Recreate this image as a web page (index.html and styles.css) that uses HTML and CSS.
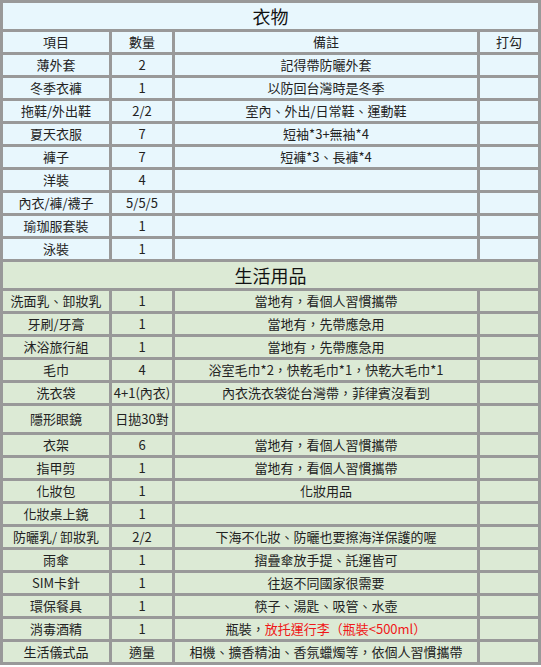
FILE: index.html
```html
<!DOCTYPE html>
<html lang="zh-Hant">
<head>
<meta charset="utf-8">
<title>行李清單</title>
<link rel="stylesheet" href="styles.css">
</head>
<body>
<table class="pack">
  <colgroup>
    <col class="c-item">
    <col class="c-qty">
    <col class="c-note">
    <col class="c-check">
  </colgroup>
  <tbody class="sec-clothes">
    <tr><td class="title" colspan="4">衣物</td></tr>
    <tr><td>項目</td><td>數量</td><td>備註</td><td>打勾</td></tr>
    <tr><td>薄外套</td><td>2</td><td>記得帶防曬外套</td><td></td></tr>
    <tr><td>冬季衣褲</td><td>1</td><td>以防回台灣時是冬季</td><td></td></tr>
    <tr><td>拖鞋/外出鞋</td><td>2/2</td><td>室內、外出/日常鞋、運動鞋</td><td></td></tr>
    <tr><td>夏天衣服</td><td>7</td><td>短袖*3+無袖*4</td><td></td></tr>
    <tr><td>褲子</td><td>7</td><td>短褲*3、長褲*4</td><td></td></tr>
    <tr><td>洋裝</td><td>4</td><td></td><td></td></tr>
    <tr><td>內衣/褲/襪子</td><td>5/5/5</td><td></td><td></td></tr>
    <tr><td>瑜珈服套裝</td><td>1</td><td></td><td></td></tr>
    <tr><td>泳裝</td><td>1</td><td></td><td></td></tr>
  </tbody>
  <tbody class="sec-life">
    <tr><td class="title" colspan="4">生活用品</td></tr>
    <tr><td>洗面乳、卸妝乳</td><td>1</td><td>當地有，看個人習慣攜帶</td><td></td></tr>
    <tr><td>牙刷/牙膏</td><td>1</td><td>當地有，先帶應急用</td><td></td></tr>
    <tr><td>沐浴旅行組</td><td>1</td><td>當地有，先帶應急用</td><td></td></tr>
    <tr><td>毛巾</td><td>4</td><td>浴室毛巾*2，快乾毛巾*1，快乾大毛巾*1</td><td></td></tr>
    <tr><td>洗衣袋</td><td>4+1(內衣)</td><td>內衣洗衣袋從台灣帶，菲律賓沒看到</td><td></td></tr>
    <tr class="tall"><td>隱形眼鏡</td><td>日拋30對</td><td></td><td></td></tr>
    <tr><td>衣架</td><td>6</td><td>當地有，看個人習慣攜帶</td><td></td></tr>
    <tr><td>指甲剪</td><td>1</td><td>當地有，看個人習慣攜帶</td><td></td></tr>
    <tr><td>化妝包</td><td>1</td><td>化妝用品</td><td></td></tr>
    <tr><td>化妝桌上鏡</td><td>1</td><td></td><td></td></tr>
    <tr><td>防曬乳/ 卸妝乳</td><td>2/2</td><td>下海不化妝、防曬也要擦海洋保護的喔</td><td></td></tr>
    <tr><td>雨傘</td><td>1</td><td>摺疊傘放手提、託運皆可</td><td></td></tr>
    <tr><td>SIM卡針</td><td>1</td><td>往返不同國家很需要</td><td></td></tr>
    <tr><td>環保餐具</td><td>1</td><td>筷子、湯匙、吸管、水壺</td><td></td></tr>
    <tr><td>消毒酒精</td><td>1</td><td>瓶裝，<span class="warn">放托運行李（瓶裝&lt;500ml）</span></td><td></td></tr>
    <tr><td>生活儀式品</td><td>適量</td><td>相機、擴香精油、香氛蠟燭等，依個人習慣攜帶</td><td></td></tr>
  </tbody>
</table>
</body>
</html>
```

FILE: styles.css
```css
html, body {
  margin: 0;
  padding: 0;
  background: #ffffff;
}

body {
  font-family: "Noto Sans CJK JP", "Noto Sans CJK TC", sans-serif;
  font-size: 13px;
  color: #222222;
}

.pack {
  width: 541px;
  table-layout: fixed;
  border-collapse: separate;
  border-spacing: 3px;
  background: #999999;
}

.c-item { width: 106px; }
.c-qty { width: 60px; }
.c-note { width: 302px; }
.c-check { width: 58px; }

.pack td {
  height: 20px;
  padding: 0;
  line-height: 20px;
  text-align: center;
  vertical-align: middle;
  white-space: nowrap;
  overflow: visible;
}

.sec-clothes td {
  background: #e8f7fd;
}

.sec-life td {
  background: #dcead5;
}

.pack td.title {
  height: 26px;
  line-height: 26px;
  font-size: 18px;
  color: #111111;
}

.pack tr.tall td {
  height: 26px;
}

.warn {
  color: #f01818;
}
```
